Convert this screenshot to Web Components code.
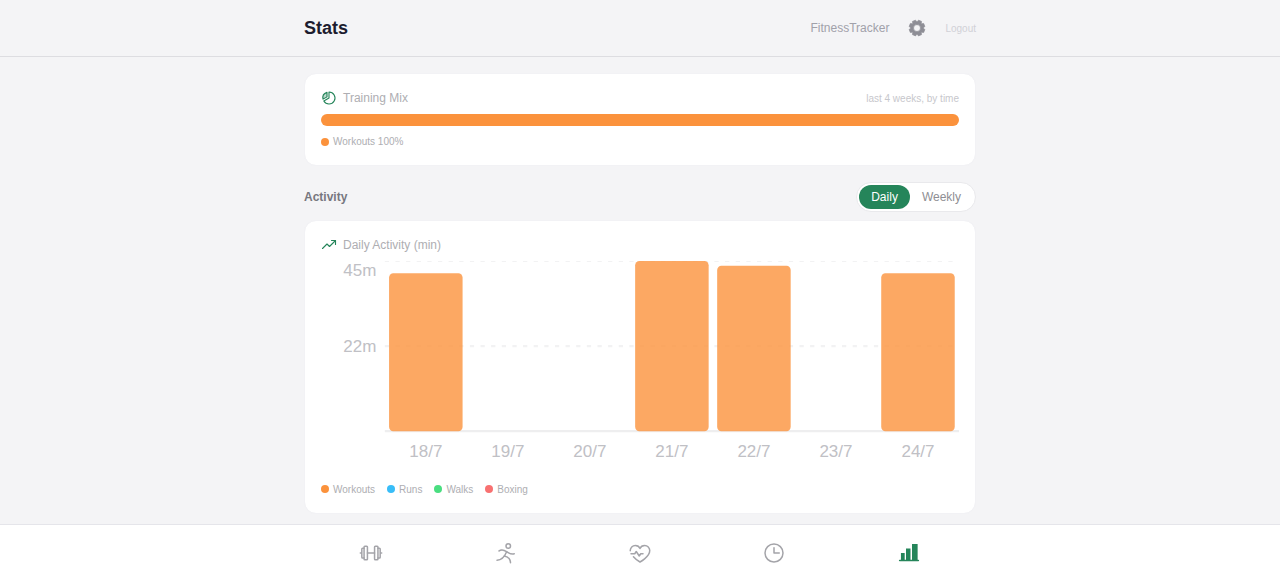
<!DOCTYPE html>
<html lang="en">
<head>
  <meta charset="UTF-8">
  <meta name="viewport" content="width=device-width, initial-scale=1.0">
  <title>Stats - FitnessTracker</title>
  <style>
    :root {
      --bg: #f4f4f6;
      --line: #dddde1;
      --green: #25855a;
      --orange: #fb923c;
      --muted: #aeaeb2;
      --faint: #c7c7cc;
    }
    body {
      margin: 0;
      background: var(--bg);
      font-family: "Liberation Sans", Arial, sans-serif;
      font-size: 12px;
      line-height: 16px;
    }
  </style>
</head>
<body>
  <stats-page></stats-page>

  <script>
    // Stroke icons share a 256 grid
    const icons = {
      pie: `
        <path d="M96 38v72L33 146C20 96 47 55 96 38Z" fill="currentColor" fill-opacity=".3" stroke-width="18"/>
        <path d="M128 32a96 96 0 1 1-83 145M128 32v96l-83 49" stroke-width="18"/>`,
      trend: `
        <polyline points="232 56 136 152 96 112 24 184" stroke-width="18"/>
        <polyline points="232 120 232 56 168 56" stroke-width="18"/>`,
      gear: `
        <path d="M220 134L240 149L222 193L197 188L188 197L193 222L149 240L134 220H122L107 240L63 222L68 197L59 188L34 193L16 149L36 134V122L16 107L34 63L59 68L68 59L63 34L107 16L122 36H134L149 16L193 34L188 59L197 68L222 63L240 107L220 122ZM128 78a50 50 0 1 0 0 100a50 50 0 1 0 0-100Z"
              fill="currentColor" fill-rule="evenodd" stroke-width="10"/>`,
      barbell: `
        <rect x="54" y="56" width="36" height="144" rx="8"/>
        <rect x="166" y="56" width="36" height="144" rx="8"/>
        <path d="M90 128h76M54 180H38a8 8 0 0 1-8-8V84a8 8 0 0 1 8-8h16M202 76h16a8 8 0 0 1 8 8v88a8 8 0 0 1-8 8h-16M30 128H14M226 128h16"/>`,
      run: `
        <circle cx="152" cy="54" r="24"/>
        <path d="M54 106s32-26 80 7c50 35 82 23 82 23"/>
        <path d="M109 161c18 4 67 15 67 71"/>
        <path d="M135 114c-9 22-39 90-103 90"/>`,
      heart: `
        <polyline points="32 136 72 136 88 112 120 160 136 136 160 136"/>
        <path d="M24 104v-2a54 54 0 0 1 54-54c23 0 42 12 50 32 8-20 27-32 50-32a54 54 0 0 1 54 54c0 66-104 122-104 122s-42-23-70-56"/>`,
      clock: `
        <circle cx="128" cy="128" r="96"/>
        <polyline points="128 72 128 128 184 128"/>`,
      bars: `
        <path d="M42 208v-80h40v80zM96 208V80h48v128zM160 208V32h60v176z" fill="currentColor" stroke="none"/>
        <path d="M28 208h200"/>`
    };

    class FitIcon extends HTMLElement {
      constructor() {
        super();
        this.attachShadow({ mode: 'open' });
      }

      connectedCallback() {
        this.shadowRoot.innerHTML = `
          <style>
            :host { display: block; flex: none; width: 24px; height: 24px; }
            svg { display: block; width: 100%; height: 100%; }
          </style>
          <svg viewBox="0 0 256 256" fill="none" stroke="currentColor" stroke-width="16"
               stroke-linecap="round" stroke-linejoin="round" aria-hidden="true">
            ${icons[this.getAttribute('name')]}
          </svg>
        `;
      }
    }

    class PageHeader extends HTMLElement {
      constructor() {
        super();
        this.attachShadow({ mode: 'open' });
      }

      connectedCallback() {
        this.shadowRoot.innerHTML = `
          <style>
            :host { display: block; border-bottom: 1px solid var(--line); }
            header {
              display: flex;
              align-items: center;
              justify-content: space-between;
              box-sizing: border-box;
              max-width: 672px;
              margin: 0 auto;
              padding: 14px 0;
            }
            h1 { margin: 0; font-size: 18px; line-height: 28px; color: #1c1c2e; }
            .user { display: flex; align-items: center; gap: 19px; color: #a1a1aa; }
            button {
              padding: 0;
              border: 0;
              background: none;
              font: inherit;
              cursor: pointer;
            }
            .settings { color: #8e8e96; }
            .settings fit-icon { width: 18px; height: 18px; }
            .logout { font-size: 10px; line-height: 15px; color: #d1d1d6; }
          </style>
          <header>
            <h1><slot></slot></h1>
            <div class="user">
              <span>FitnessTracker</span>
              <button class="settings" aria-label="Settings"><fit-icon name="gear"></fit-icon></button>
              <button class="logout">Logout</button>
            </div>
          </header>
        `;
      }
    }

    class StatCard extends HTMLElement {
      constructor() {
        super();
        this.attachShadow({ mode: 'open' });
      }

      connectedCallback() {
        const note = this.getAttribute('note') || '';

        this.shadowRoot.innerHTML = `
          <style>
            :host {
              display: block;
              padding: 16px;
              background: #fff;
              background-clip: padding-box;
              border: 1px solid #f2f2f5;
              border-radius: 12px;
            }
            .head { display: flex; align-items: center; gap: 6px; margin-bottom: 8px; }
            fit-icon { width: 16px; height: 16px; color: var(--green); }
            h2 { margin: 0; font-size: 12px; font-weight: 400; color: var(--muted); }
            .note { margin-left: auto; font-size: 10px; line-height: 15px; color: var(--faint); }
          </style>
          <div class="head">
            <fit-icon name="${this.getAttribute('icon')}"></fit-icon>
            <h2>${this.getAttribute('heading')}</h2>
            <span class="note">${note}</span>
          </div>
          <slot></slot>
        `;
      }
    }

    class ChartLegend extends HTMLElement {
      constructor() {
        super();
        this.attachShadow({ mode: 'open' });
      }

      connectedCallback() {
        const colors = ['#fb923c', '#38bdf8', '#4ade80', '#f87171'];
        const items = this.getAttribute('items').split(',');

        this.shadowRoot.innerHTML = `
          <style>
            :host { display: block; margin-top: 8px; }
            ul {
              display: flex;
              flex-wrap: wrap;
              gap: 12px;
              margin: 0;
              padding: 0;
              list-style: none;
              font-size: 10px;
              line-height: 15px;
              color: var(--muted);
            }
            li { display: flex; align-items: center; gap: 4px; }
            i { width: 8px; height: 8px; border-radius: 50%; }
          </style>
          <ul>
            ${items.map((item, i) =>
              `<li><i style="background: ${colors[i]}"></i>${item}</li>`
            ).join('')}
          </ul>
        `;
      }
    }

    class MixBar extends HTMLElement {
      constructor() {
        super();
        this.attachShadow({ mode: 'open' });
        this.shadowRoot.innerHTML = `
          <style>
            :host {
              display: flex;
              height: 12px;
              border-radius: 6px;
              overflow: hidden;
            }
            div { flex: 1; background: var(--orange); }
          </style>
          <div></div>
        `;
      }
    }

    class PeriodToggle extends HTMLElement {
      constructor() {
        super();
        this.attachShadow({ mode: 'open' });
      }

      connectedCallback() {
        this.shadowRoot.innerHTML = `
          <style>
            :host {
              display: flex;
              padding: 2px;
              background: #fff;
              border: 1px solid #e9e9ec;
              border-radius: 16px;
            }
            button {
              padding: 4px 12px;
              border: 0;
              border-radius: 12px;
              background: none;
              font: inherit;
              color: #8e8e93;
              cursor: pointer;
            }
            button[aria-pressed="true"] { background: var(--green); color: #fff; }
          </style>
          <button aria-pressed="true">Daily</button>
          <button aria-pressed="false">Weekly</button>
        `;

        const buttons = this.shadowRoot.querySelectorAll('button');
        buttons.forEach(button => button.addEventListener('click', () => {
          buttons.forEach(b => b.setAttribute('aria-pressed', b === button));
        }));
      }
    }

    class ActivityChart extends HTMLElement {
      constructor() {
        super();
        this.attachShadow({ mode: 'open' });
      }

      connectedCallback() {
        const days = [
          ['18/7', 74.2], ['19/7', 0], ['20/7', 0], ['21/7', 80],
          ['22/7', 77.8], ['23/7', 0], ['24/7', 74.2]
        ];
        const left = 30;
        const step = 270 / days.length;

        this.shadowRoot.innerHTML = `
          <style>
            :host { display: block; }
            svg { display: block; width: 100%; height: auto; }
            text { font-size: 8px; fill: #c0c0c5; }
            line { stroke: #eeeeef; stroke-width: 1; }
            .dash { stroke: #f2f2f3; stroke-dasharray: 2 3; }
            rect { fill: var(--orange); opacity: .8; }
          </style>
          <svg viewBox="0 0 300 100" role="img" aria-label="Daily activity in minutes">
            <line class="dash" x1="${left}" y1="0" x2="300" y2="0"/>
            <line class="dash" x1="${left}" y1="40" x2="300" y2="40"/>
            <line x1="${left}" y1="80" x2="300" y2="80"/>
            <text x="26" y="7" text-anchor="end">45m</text>
            <text x="26" y="43" text-anchor="end">22m</text>
            ${days.map(([, h], i) => h
              ? `<rect x="${left + i * step + 2}" y="${80 - h}" width="${step - 4}" height="${h}" rx="2"/>`
              : ''
            ).join('')}
            ${days.map(([day], i) =>
              `<text x="${left + (i + 0.5) * step}" y="92" text-anchor="middle">${day}</text>`
            ).join('')}
          </svg>
        `;
      }
    }

    class TabBar extends HTMLElement {
      constructor() {
        super();
        this.attachShadow({ mode: 'open' });
      }

      connectedCallback() {
        const tabs = [
          ['Workouts', 'barbell'], ['Runs', 'run'], ['Health', 'heart'],
          ['History', 'clock'], ['Stats', 'bars']
        ];

        this.shadowRoot.innerHTML = `
          <style>
            :host { display: block; background: #fff; border-top: 1px solid #e5e5ea; }
            nav { display: flex; max-width: 672px; margin: 0 auto; }
            a {
              display: flex;
              flex: 1;
              justify-content: center;
              padding: 16px 0 12px;
              color: #a4a4a9;
            }
            a[aria-current] { color: var(--green); }
          </style>
          <nav>
            ${tabs.map(([label, icon]) => `
              <a href="#${icon}" aria-label="${label}" ${label === 'Stats' ? 'aria-current="page"' : ''}>
                <fit-icon name="${icon}"></fit-icon>
              </a>`
            ).join('')}
          </nav>
        `;
      }
    }

    class StatsPage extends HTMLElement {
      constructor() {
        super();
        this.attachShadow({ mode: 'open' });
      }

      connectedCallback() {
        this.shadowRoot.innerHTML = `
          <style>
            :host { display: flex; flex-direction: column; min-height: 100vh; }
            main {
              flex: 1;
              box-sizing: border-box;
              width: 100%;
              max-width: 672px;
              margin: 0 auto;
              padding: 16px 0 8px;
            }
            .row {
              display: flex;
              align-items: center;
              justify-content: space-between;
              margin: 16px 0 8px;
            }
            h2 { margin: 0; font-size: 12px; color: #77777f; }
          </style>
          <page-header>Stats</page-header>
          <main>
            <stat-card icon="pie" heading="Training Mix" note="last 4 weeks, by time">
              <mix-bar></mix-bar>
              <chart-legend items="Workouts 100%"></chart-legend>
            </stat-card>
            <div class="row">
              <h2>Activity</h2>
              <period-toggle></period-toggle>
            </div>
            <stat-card icon="trend" heading="Daily Activity (min)">
              <activity-chart></activity-chart>
              <chart-legend items="Workouts,Runs,Walks,Boxing"></chart-legend>
            </stat-card>
          </main>
          <tab-bar></tab-bar>
        `;
      }
    }

    customElements.define('fit-icon', FitIcon);
    customElements.define('page-header', PageHeader);
    customElements.define('stat-card', StatCard);
    customElements.define('chart-legend', ChartLegend);
    customElements.define('mix-bar', MixBar);
    customElements.define('period-toggle', PeriodToggle);
    customElements.define('activity-chart', ActivityChart);
    customElements.define('tab-bar', TabBar);
    customElements.define('stats-page', StatsPage);
  </script>
</body>
</html>
